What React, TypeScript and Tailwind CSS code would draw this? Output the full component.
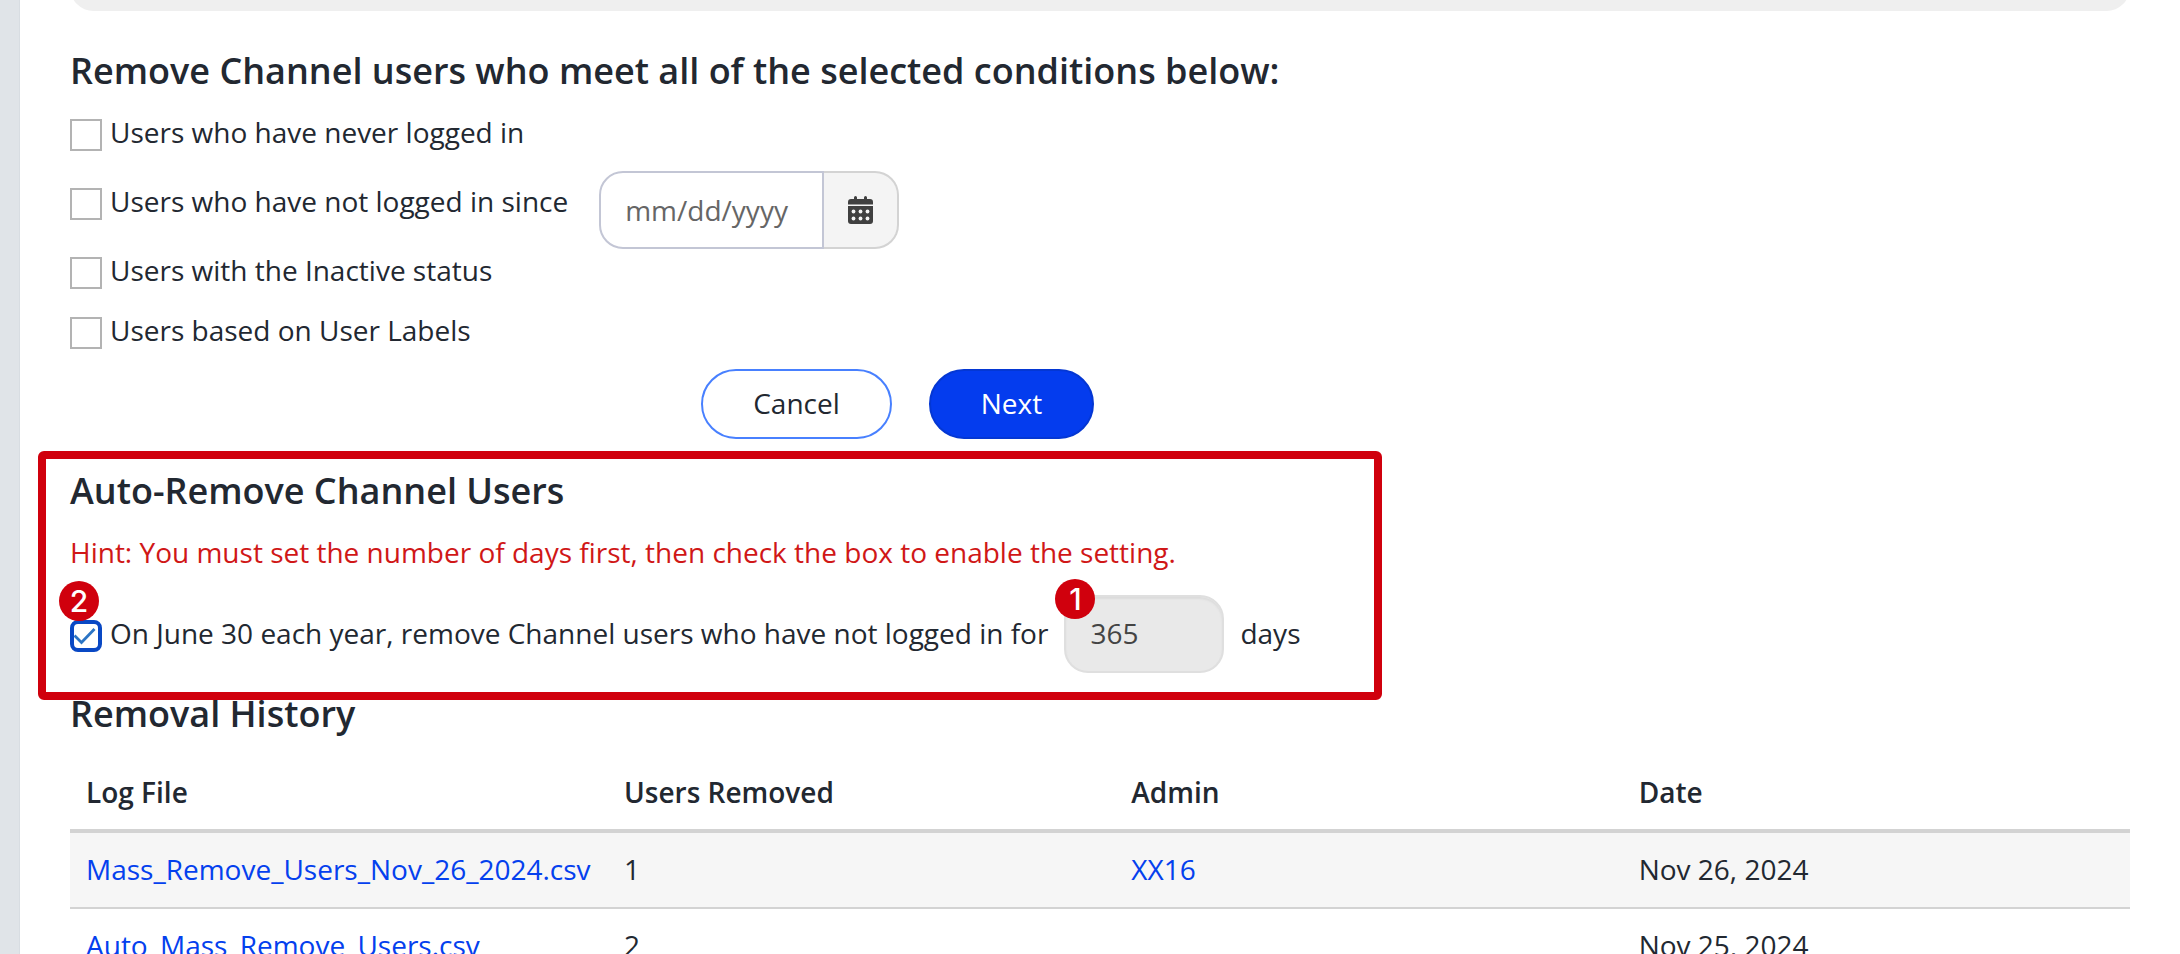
import { useState } from 'react';
import type { ReactNode } from 'react';

const logs = [
  { file: 'Mass_Remove_Users_Nov_26_2024.csv', removed: 1, admin: 'XX16', date: 'Nov 26, 2024' },
  { file: 'Auto_Mass_Remove_Users.csv', removed: 2, admin: '', date: 'Nov 25, 2024' },
];

const headingClass = 'text-4xl leading-[48px] font-semibold';

function Condition({ id, children }: { id: string; children: ReactNode }) {
  return (
    <div className="flex items-start gap-2">
      <input
        id={id}
        type="checkbox"
        className="mt-[7px] size-8 shrink-0 appearance-none border-2 border-[#b3b3b3] bg-white checked:bg-[#0440ee]"
      />
      <label htmlFor={id}>{children}</label>
    </div>
  );
}

function CalendarIcon() {
  return (
    <svg viewBox="0 0 25 28" className="h-7 w-[25px]" fill="#404040" aria-hidden="true">
      <path d="M0 8.500V6a3 3 0 0 1 3-3h3V1.500a1.500 1.500 0 0 1 3 0V3h7V1.500a1.500 1.500 0 0 1 3 0V3h3a3 3 0 0 1 3 3v2.500z" />
      <path d="M0 10h25v15a3 3 0 0 1-3 3H3a3 3 0 0 1-3-3z" />
      <g fill="#f4f4f4">
        <circle cx="5.500" cy="15.500" r="1.900" />
        <circle cx="12.500" cy="15.500" r="1.900" />
        <circle cx="19.500" cy="15.500" r="1.900" />
        <circle cx="5.500" cy="22.500" r="1.900" />
        <circle cx="12.500" cy="22.500" r="1.900" />
        <circle cx="19.500" cy="22.500" r="1.900" />
      </g>
    </svg>
  );
}

function StepBadge({ step, className }: { step: number; className: string }) {
  return (
    <span
      className={`absolute z-10 flex size-10 items-center justify-center rounded-full bg-[#d0000d] font-['Inter'] text-3xl font-medium text-white ${className}`}
    >
      {step}
    </span>
  );
}

export default function App() {
  const [autoRemove, setAutoRemove] = useState(true);

  return (
    <div className="flex h-screen overflow-hidden bg-white font-['Open_Sans',sans-serif] text-[28px] leading-10 text-[#222831]">
      <div className="w-5 shrink-0 border-r border-[#d8dde2] bg-[#e0e4e8]" />

      <main className="min-w-0 flex-1 px-[50px]">
        <div className="-mt-9 h-[47px] rounded-3xl bg-[#efefef]" />

        <form className="mt-9" onSubmit={(e) => e.preventDefault()}>
          <h2 className={headingClass}>Remove Channel users who meet all of the selected conditions below:</h2>

          <div className="mt-[17px]">
            <Condition id="never">Users who have never logged in</Condition>
            <div className="mt-[19px] flex gap-[31px]">
              <div className="pt-[10px]">
                <Condition id="since">Users who have not logged in since</Condition>
              </div>
              <div className="flex h-[78px]">
                <input
                  type="text"
                  placeholder="mm/dd/yyyy"
                  aria-label="Last login date"
                  className="w-[225px] rounded-l-3xl border-2 border-[#c3c6d5] px-6 placeholder:text-[#666666]"
                />
                <button
                  type="button"
                  aria-label="Open calendar"
                  className="flex w-[75px] items-center justify-center rounded-r-3xl border-2 border-l-0 border-[#d3d3d3] bg-[#f4f4f4]"
                >
                  <CalendarIcon />
                </button>
              </div>
            </div>
            <div className="mt-px">
              <Condition id="inactive">Users with the Inactive status</Condition>
            </div>
            <div className="mt-5">
              <Condition id="labels">Users based on User Labels</Condition>
            </div>
          </div>

          <div className="mt-[19px] ml-[631px] flex h-[70px] gap-[37px]">
            <button type="button" className="w-[191px] rounded-full border-2 border-[#4880ff] pb-0.5">
              Cancel
            </button>
            <button type="submit" className="w-[165px] rounded-full border-2 border-[#0437d3] bg-[#043cee] pb-0.5 text-white">
              Next
            </button>
          </div>
        </form>

        <section className="relative mt-7">
          {/* Callout around the whole setting */}
          <div className="pointer-events-none absolute -top-4 -left-8 z-10 h-[249px] w-[1344px] rounded-md border-8 border-[#d0000d]" />

          <h2 className={headingClass}>Auto-Remove Channel Users</h2>
          <p className="mt-[17px] text-[#d01717]">
            Hint: You must set the number of days first, then check the box to enable the setting.
          </p>
          <div className="mt-[23px] flex gap-4">
            <div className="relative flex items-start gap-2 pt-[18px]">
              <StepBadge step={2} className="-top-[14px] -left-[11px]" />
              <span className="relative mt-[7px] block size-8">
                <input
                  id="auto"
                  type="checkbox"
                  checked={autoRemove}
                  onChange={(e) => setAutoRemove(e.target.checked)}
                  className="block size-8 appearance-none rounded-lg border-4 border-[#0948c4] bg-white"
                />
                {autoRemove && (
                  <svg viewBox="0 0 32 32" className="pointer-events-none absolute inset-0 size-8" fill="none" aria-hidden="true">
                    <path d="M4.500 15.500l7 7L24.500 9" stroke="#2b74c4" strokeWidth="2.800" />
                  </svg>
                )}
              </span>
              <label htmlFor="auto">On June 30 each year, remove Channel users who have not logged in for</label>
            </div>
            <div className="relative">
              <StepBadge step={1} className="-top-4 -left-[9px]" />
              <input
                id="days"
                type="text"
                defaultValue="365"
                disabled
                className="block h-[78px] w-40 rounded-3xl border-2 border-[#dfdfdf] bg-[#e9e9e9] px-6 pb-0.5 text-[#444444] shadow-[inset_0_2px_2px_#dcdcdc]"
              />
            </div>
            <label htmlFor="days" className="pt-[18px]">days</label>
          </div>
        </section>

        <section className="mt-[17px]">
          <h2 className={headingClass}>Removal History</h2>
          <table className="mt-[18px] w-full table-fixed text-left">
            <thead>
              <tr className="border-b-4 border-[#d3d3d3]">
                <th className="w-[538px] px-4 pt-4 pb-[17px] font-semibold">Log File</th>
                <th className="px-4 pt-4 pb-[17px] font-semibold">Users Removed</th>
                <th className="px-4 pt-4 pb-[17px] font-semibold">Admin</th>
                <th className="px-4 pt-4 pb-[17px] font-semibold">Date</th>
              </tr>
            </thead>
            <tbody>
              {logs.map((log) => (
                <tr key={log.file} className="border-b-2 border-[#d3d3d3] odd:bg-[#f6f6f6]">
                  <td className="px-4 pt-4 pb-[18px] whitespace-nowrap">
                    <a href="#log" className="text-[#0440ee]">{log.file}</a>
                  </td>
                  <td className="px-4 pt-4 pb-[18px]">{log.removed}</td>
                  <td className="px-4 pt-4 pb-[18px]">
                    {log.admin && <a href="#admin" className="text-[#0440ee]">{log.admin}</a>}
                  </td>
                  <td className="px-4 pt-4 pb-[18px]">{log.date}</td>
                </tr>
              ))}
            </tbody>
          </table>
        </section>
      </main>
    </div>
  );
}
